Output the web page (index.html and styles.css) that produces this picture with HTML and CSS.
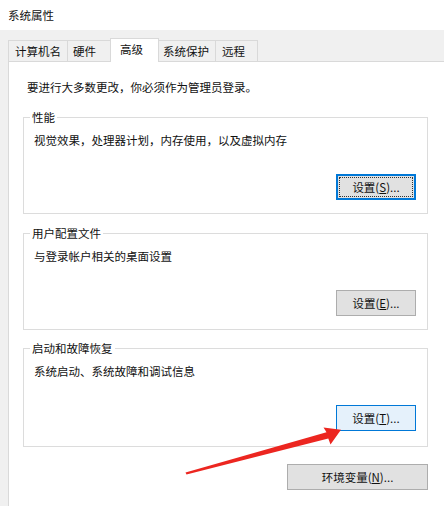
FILE: index.html
```html
<!DOCTYPE html>
<html lang="zh-CN">
<head>
    <meta charset="UTF-8">
    <meta name="viewport" content="width=device-width, initial-scale=1.0">
    <title>系统属性</title>
    <link rel="stylesheet" href="styles.css">
</head>
<body>
    <div class="window">
        <div class="titlebar">系统属性</div>

        <div class="tabs">
            <div class="tab tab-computer">计算机名</div>
            <div class="tab tab-hardware">硬件</div>
            <div class="tab tab-advanced active">高级</div>
            <div class="tab tab-protect">系统保护</div>
            <div class="tab tab-remote">远程</div>
        </div>

        <div class="panel">
            <p class="intro">要进行大多数更改，你必须作为管理员登录。</p>

            <fieldset class="group">
                <legend>性能</legend>
                <p class="group-desc">视觉效果，处理器计划，内存使用，以及虚拟内存</p>
                <div class="group-actions">
                    <button class="btn btn-default">设置(<u>S</u>)...</button>
                </div>
            </fieldset>

            <fieldset class="group group-second">
                <legend>用户配置文件</legend>
                <p class="group-desc">与登录帐户相关的桌面设置</p>
                <div class="group-actions">
                    <button class="btn">设置(<u>E</u>)...</button>
                </div>
            </fieldset>

            <fieldset class="group group-third">
                <legend>启动和故障恢复</legend>
                <p class="group-desc">系统启动、系统故障和调试信息</p>
                <div class="group-actions">
                    <button class="btn btn-hover">设置(<u>T</u>)...</button>
                </div>
            </fieldset>

            <div class="panel-actions">
                <button class="btn btn-wide">环境变量(<u>N</u>)...</button>
            </div>
        </div>

        <!-- red arrow drawn over the screenshot -->
        <svg class="annotation" width="444" height="506" viewBox="0 0 444 506">
            <polygon fill="#ec2620" points="185.5,472.6 326.5,432.2 323.5,427.6 341,429.8 330.5,444.5 328.3,438.4 186.5,474.4"/>
        </svg>
    </div>
</body>
</html>
```

FILE: styles.css
```css
body {
    margin: 0;
    padding: 0;
    font-family: "Noto Sans CJK SC", "Noto Sans", sans-serif;
    font-size: 11.5px;
    color: #111;
}
.window {
    position: relative;
    width: 444px;
    height: 506px;
    overflow: hidden;
    background-color: #f0f0f0;
}
.titlebar {
    height: 30px;
    line-height: 30px;
    padding-left: 8px;
    background-color: #fff;
}
.tabs {
    display: flex;
    align-items: flex-end;
    height: 23px;
    margin-top: 8px;
    padding-left: 8px;
}
.tab {
    box-sizing: border-box;
    height: 21px;
    line-height: 20px;
    padding-left: 5px;
    border: 1px solid #d9d9d9;
    border-bottom: none;
    border-right: none;
    background-color: #f0f0f0;
}
.tab-computer { width: 59px; padding-left: 6px; }
.tab-hardware { width: 43px; }
.tab-advanced { width: 49px; padding-left: 9px; }
.tab-protect { width: 56px; padding-left: 4px; }
.tab-remote { width: 43px; padding-left: 6px; border-right: 1px solid #d9d9d9; }
.tab.active {
    position: relative;
    z-index: 1;
    height: 24px;
    line-height: 20px;
    margin-bottom: -1px;
    background-color: #fff;
    border-right: 1px solid #d9d9d9;
}
.tab.active + .tab {
    border-left: none;
}
.panel {
    height: 460px;
    margin-left: 8px;
    margin-right: -20px;
    padding: 17px 0 0 14px;
    border: 1px solid #d9d9d9;
    border-right: none;
    background-color: #fff;
}
.intro {
    margin: 0;
    padding-left: 4px;
    line-height: 16px;
}
.group {
    box-sizing: border-box;
    width: 405px;
    margin: 14px 0 0;
    padding: 0 11px 13px 10px;
    border: 1px solid #dcdcdc;
}
.group-second {
    margin-top: 11px;
}
.group-third {
    margin-top: 10px;
    padding-bottom: 15px;
}
.group legend {
    margin-left: -4px;
    padding: 0 2px;
    line-height: 16px;
}
.group-desc {
    margin: 7px 0 0;
    line-height: 16px;
}
.group-actions {
    display: flex;
    justify-content: flex-end;
    margin-top: 26px;
}
.panel-actions {
    display: flex;
    justify-content: flex-end;
    width: 405px;
    margin-top: 17px;
}
.btn {
    width: 80px;
    height: 26px;
    padding: 0;
    font-family: inherit;
    font-size: 11.5px;
    color: #111;
    background-color: #e1e1e1;
    border: 1px solid #adadad;
}
.btn u {
    text-underline-offset: 1px;
}
.btn-default {
    border-color: #0078d7;
    box-shadow: inset 0 0 0 1px #0078d7;
    outline: 1px dotted #333;
    outline-offset: -4px;
}
.btn-hover {
    background-color: #e5f1fb;
    border-color: #0078d7;
}
.btn-wide {
    width: 141px;
}
.annotation {
    position: absolute;
    left: 0;
    top: 0;
    pointer-events: none;
}
```
